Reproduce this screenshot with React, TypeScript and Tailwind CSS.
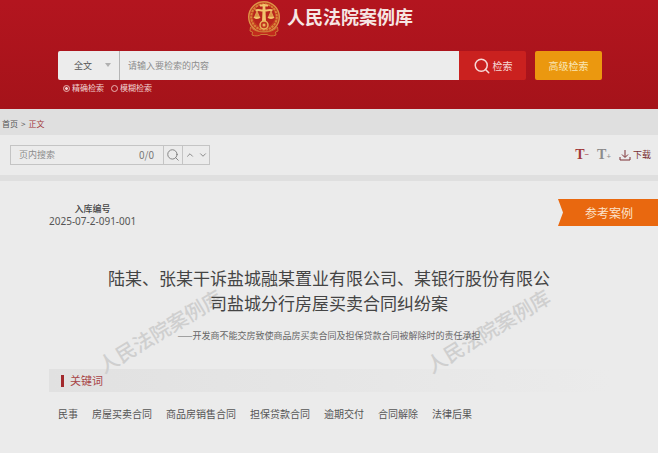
import { ChevronDown, ChevronUp, Search } from 'lucide-react';

const keywords = [
  '民事',
  '房屋买卖合同',
  '商品房销售合同',
  '担保贷款合同',
  '逾期交付',
  '合同解除',
  '法律后果',
];

const CourtEmblem = () => (
  <svg viewBox="0 0 34 38" className="h-[38px] w-[34px]" fill="none" aria-hidden="true">
    <circle cx="17" cy="17" r="15.3" fill="#c33a20" stroke="#dd9446" strokeWidth="1.4" />
    <circle cx="17" cy="17" r="12.8" stroke="#d98438" strokeWidth="2" strokeDasharray="2.4 0.8" />
    <circle cx="17" cy="16" r="11" fill="#b8241c" />
    <path d="M15.8 4h2.400l.8 18h-4z" fill="#f2c46c" />
    <path d="M13 5.500h8" stroke="#f2c46c" strokeWidth="2" />
    <path d="M8.500 10.500c3-1.600 5.500.6 8.500-.2 3 .8 5.500-1.400 8.500.2" stroke="#f2c46c" strokeWidth="2" />
    <path d="M10 11 7.500 17h5zM24 11l-2.500 6h5z" fill="#dd9446" stroke="#e8b25c" strokeWidth=".7" />
    <path d="M6.500 17h7c-.6 2.600-6.400 2.600-7 0zM20.500 17h7c-.6 2.600-6.400 2.600-7 0z" fill="#f2c46c" />
    <circle cx="17" cy="25" r="4" fill="#c33a20" stroke="#eab55c" strokeWidth="1.500" />
    <circle cx="17" cy="25" r="1.500" fill="#eab55c" />
    <path
      d="M3.500 27c3 3.500 8 5 13.500 5s10.500-1.500 13.500-5l.5 4-2.500 1 .5 3c-3.500 1.500-7 1-9-.5h-6c-2 1.500-5.500 2-9 .5l.5-3-2.500-1z"
      fill="#c22a1c"
      stroke="#cf7a38"
      strokeWidth="1"
    />
  </svg>
);

const DownloadIcon = () => (
  <svg viewBox="0 0 12 12" className="size-3" fill="none" stroke="currentColor" aria-hidden="true">
    <path d="M6 1v7M3 5.500l3 3 3-3M1 8v3h10V8" />
  </svg>
);

const Watermark = ({ className }: { className: string }) => (
  <span
    aria-hidden="true"
    className={`pointer-events-none absolute -rotate-31 text-xl leading-6 font-medium whitespace-nowrap text-[#cfcfcf] ${className}`}
  >
    人民法院案例库
  </span>
);

const Header = () => (
  <header className="bg-linear-to-b from-[#b3151f] to-[#a5131a] pr-4 pb-[15px] pl-[18px]">
    <div className="mx-auto flex max-w-[544px] flex-col">
      <div className="flex h-[51px] items-start justify-center">
        <CourtEmblem />
        <h1 className="ml-1.5 pt-1 text-lg leading-6 font-bold text-[#f6e6e4]">人民法院案例库</h1>
      </div>

      <form className="flex h-[29px]" onSubmit={(e) => e.preventDefault()}>
        <div className="relative flex w-[62px] shrink-0 rounded-l-xs border-r border-[#b5b5b5] bg-[#ececec]">
          <select
            aria-label="检索范围"
            className="w-full appearance-none pl-4 text-[9px] text-[#555]"
          >
            <option>全文</option>
          </select>
          <span className="pointer-events-none absolute top-3 right-2 border-x-3 border-t-4 border-x-transparent border-t-[#b0b0b0]" />
        </div>
        <input
          type="text"
          aria-label="检索内容"
          placeholder="请输入要检索的内容"
          className="min-w-0 flex-1 bg-[#ececec] px-2 text-[9px] text-[#555] placeholder:text-[#8c8c8c]"
        />
        <button
          type="submit"
          className="flex w-[67px] shrink-0 items-center justify-center gap-0.5 rounded-r-xs bg-[#ca211f] text-[10px] text-[#f7d9d6]"
        >
          <Search className="size-[18px]" />
          检索
        </button>
        <button
          type="button"
          className="ml-[9px] w-[67px] shrink-0 rounded-xs bg-[#eb980f] text-[10px] text-[#fae6b4]"
        >
          高级检索
        </button>
      </form>

      <div className="mt-0.5 flex gap-2 pl-1.5 text-[8px] leading-3 text-[#f2d5d3]">
        <label className="flex items-center gap-[3px]">
          <input
            type="radio"
            name="mode"
            defaultChecked
            className="size-[5px] appearance-none rounded-full outline outline-[#e8b5b2] checked:border checked:border-[#a9141c] checked:bg-[#f2d5d3]"
          />
          精确检索
        </label>
        <label className="flex items-center gap-[3px]">
          <input
            type="radio"
            name="mode"
            className="size-[5px] appearance-none rounded-full outline outline-[#e8b5b2] checked:bg-[#f2d5d3]"
          />
          模糊检索
        </label>
      </div>
    </div>
  </header>
);

const Toolbar = () => (
  <div className="flex h-10 items-center justify-between bg-[#ebebeb] pr-[7px] pl-2.5">
    <div className="flex h-5 border border-[#c4c4c4] text-[#777]">
      <input
        type="text"
        aria-label="页内搜索"
        placeholder="页内搜索"
        className="w-32 px-2 text-[9px] placeholder:text-[#8c8c8c]"
      />
      <span className="w-6 text-[10px] leading-[18px]">0/0</span>
      <button type="button" aria-label="搜索" className="flex w-5 items-center justify-center border-x border-[#c4c4c4]">
        <Search className="size-3.5" strokeWidth={1.5} />
      </button>
      <button type="button" aria-label="上一个" className="flex w-[13px] items-center justify-center">
        <ChevronUp className="size-2.5" />
      </button>
      <button type="button" aria-label="下一个" className="flex w-[13px] items-center justify-center">
        <ChevronDown className="size-2.5" />
      </button>
    </div>

    <div className="flex items-center gap-2 text-[#a2393b]">
      <button type="button" aria-label="缩小字号" className="flex items-center font-['Liberation_Serif',serif] text-sm leading-4 font-bold">
        T<span className="text-[8px]">−</span>
      </button>
      <button type="button" aria-label="放大字号" className="flex items-center font-['Liberation_Serif',serif] text-sm leading-4 font-bold text-[#8c8c8c]">
        T<span className="pt-1 text-[8px]">+</span>
      </button>
      <button type="button" className="flex items-center gap-0.5 text-[9px] text-[#7c3034]">
        <DownloadIcon />
        下载
      </button>
    </div>
  </div>
);

const CaseDetail = () => (
  <main className="relative flex-1 bg-[#ebebeb] pt-[18px] pb-6">
    <div className="flex items-start justify-between">
      <div className="ml-[49px] pt-1 text-center text-[#444]">
        <p className="text-[9px] leading-3 font-medium">入库编号</p>
        <p className="font-['Noto_Sans',sans-serif] text-[10px] leading-3 text-[#555]">2025-07-2-091-001</p>
      </div>
      <div className="flex h-[27px] w-[100px] items-center justify-center bg-[#e9680f] pl-0.5 text-xs text-[#fbe3cc] [clip-path:polygon(0_0,100%_0,100%_100%,0_100%,5px_50%)]">
        参考案例
      </div>
    </div>

    <div className="relative mx-auto mt-[38px] max-w-[450px] text-center">
      <Watermark className="top-[54px] -left-[14px]" />
      <Watermark className="top-[54px] -right-1" />
      <h2 className="relative text-[17px] leading-[25px] text-[#444]">
        陆某、张某干诉盐城融某置业有限公司、某银行股份有限公司盐城分行房屋买卖合同纠纷案
      </h2>
      <p className="relative mt-[13px] text-[9px] leading-4 text-[#666]">
        ——开发商不能交房致使商品房买卖合同及担保贷款合同被解除时的责任承担
      </p>
    </div>

    <section className="mx-[49px] mt-[25px]">
      <h3 className="flex h-[23px] items-center gap-1.5 bg-linear-to-r from-[#e1e1e1] to-[#ebebeb] pl-3 text-[11px] text-[#a84446]">
        <span className="h-3 w-[3px] bg-[#a2292d]" />
        关键词
      </h3>
      <ul className="mt-3.5 flex flex-wrap gap-x-3.5 pl-[9px] text-[10px] leading-4 text-[#555]">
        {keywords.map((word) => (
          <li key={word}>{word}</li>
        ))}
      </ul>
    </section>
  </main>
);

export default function App() {
  return (
    <div className="flex min-h-screen flex-col bg-[#ebebeb] font-['Noto_Sans_CJK_SC',sans-serif]">
      <Header />
      <nav className="flex h-[26px] items-center gap-[3px] bg-[#dfdfdf] pt-1 pl-0.5 text-[8px] text-[#555]">
        <a href="#home">首页</a>
        <span>&gt;</span>
        <a href="#content" className="text-[#a2393b]">
          正文
        </a>
      </nav>
      <Toolbar />
      <div className="h-1.5 bg-[#dfdfdf]" />
      <CaseDetail />
    </div>
  );
}
